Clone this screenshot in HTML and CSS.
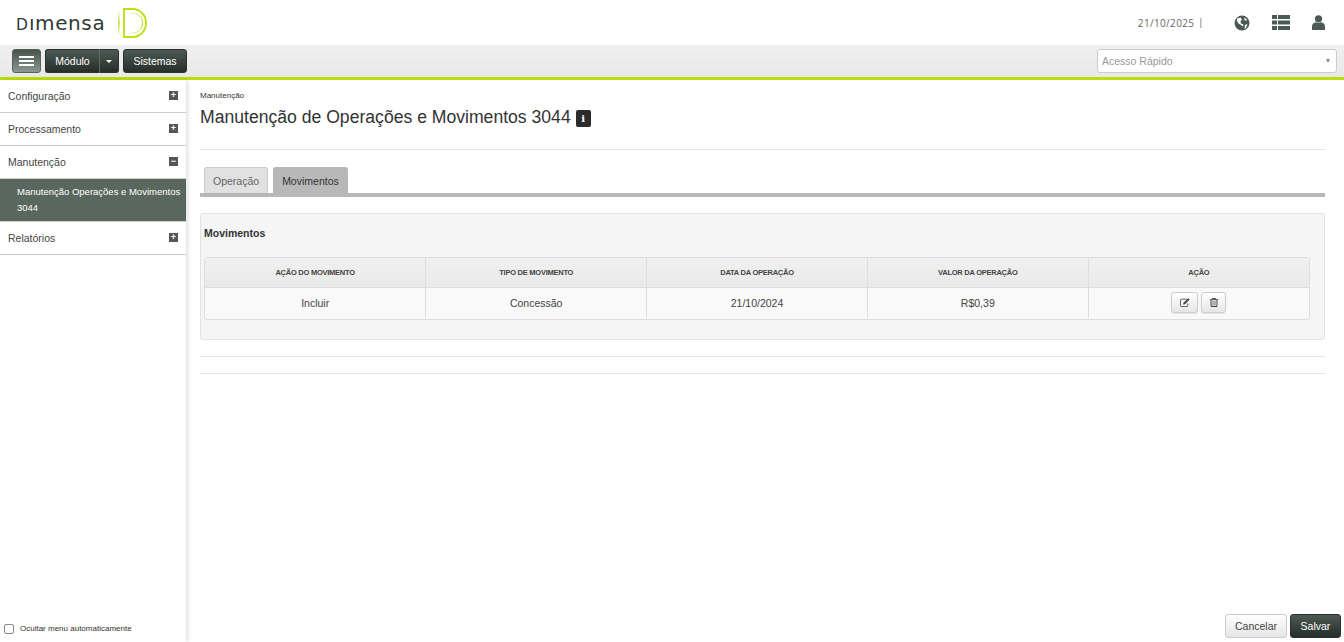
FILE: index.html
```html
<!DOCTYPE html>
<html lang="pt-BR">
<head>
<meta charset="utf-8">
<title>Manutenção de Operações e Movimentos 3044</title>
<link rel="stylesheet" href="styles.css">
</head>
<body>
<header class="topbar">
  <div class="brand">
    <span class="brand-name"><span class="brand-d">D</span>ımensa</span>
    <svg class="brand-mark" width="29" height="30" viewBox="0 0 29 30" fill="none">
      <defs>
        <linearGradient id="fadeBar" x1="0" y1="0" x2="0" y2="1"><stop offset="0" stop-color="#c6e05a" stop-opacity=".25"/><stop offset=".5" stop-color="#b9dc2c"/><stop offset="1" stop-color="#c6e05a" stop-opacity=".25"/></linearGradient>
        <linearGradient id="fadeIn" x1="0" y1="0" x2="1" y2="0"><stop offset="0" stop-color="#c6e05a" stop-opacity=".1"/><stop offset="1" stop-color="#bcdc1e"/></linearGradient>
      </defs>
      <rect x="0" y="4" width="1.600" height="22" fill="url(#fadeBar)"/>
      <path d="M6 1h8.500C22 1 28 7 28 15S22 29 14.500 29H6z" stroke="#bddf10" stroke-width="1.800"/>
      <path d="M9 5h5.500C20 5 24.500 9.500 24.500 15S20 25 14.500 25H9" stroke="url(#fadeIn)" stroke-width="1"/>
    </svg>
  </div>
  <div class="top-tools">
    <span class="date">21/10/2025</span>
    <span class="sep">|</span>
    <svg class="tool globe" width="16" height="16" viewBox="0 0 16 16"><circle cx="8" cy="8" r="7.500" fill="#4b5a52"/><path d="M3 3.500 6.500 2.500 8 4.500 6.500 6.500 7 8.500 9.500 9.500 9 11.500 7 10 4.500 8.500 3 6zM10 2.500 13 4.500 12 6 10.500 5zM11 10l2.500-1-1.500 4-1.500 1z" fill="#fff"/></svg>
    <svg class="tool list" width="18" height="15" viewBox="0 0 18 15"><g fill="#4b5a52"><rect y="0" width="5" height="4"/><rect x="6" y="0" width="12" height="4"/><rect y="5.500" width="5" height="4"/><rect x="6" y="5.500" width="12" height="4"/><rect y="11" width="5" height="4"/><rect x="6" y="11" width="12" height="4"/></g></svg>
    <svg class="tool user" width="13" height="15" viewBox="0 0 13 15"><g fill="#4b5a52"><circle cx="6.500" cy="3.800" r="3.600"/><path d="M0 15v-3.500C0 9 2 7.500 3.800 7.300c1.600 1 3.800 1 5.400 0C11 7.500 13 9 13 11.500V15z"/></g></svg>
  </div>
</header>

<nav class="toolbar">
  <div class="toolbar-left">
    <button class="menu-btn" aria-label="Menu"><span></span><span></span><span></span></button>
    <div class="btn-group">
      <button class="dark-btn modulo">Módulo</button>
      <button class="dark-btn caret-btn" aria-label="Abrir"><i class="caret"></i></button>
    </div>
    <button class="dark-btn sistemas">Sistemas</button>
  </div>
  <div class="quick">
    <span>Acesso Rápido</span>
    <i class="quick-arrow"></i>
  </div>
</nav>

<div class="layout">
  <aside class="sidebar">
    <ul class="menu">
      <li class="menu-item"><span>Configuração</span><i class="toggle">+</i></li>
      <li class="menu-item"><span>Processamento</span><i class="toggle">+</i></li>
      <li class="menu-item"><span>Manutenção</span><i class="toggle minus">−</i></li>
      <li class="menu-sub">Manutenção Operações e Movimentos 3044</li>
      <li class="menu-item"><span>Relatórios</span><i class="toggle">+</i></li>
    </ul>
    <label class="auto-hide"><input type="checkbox"><span>Ocultar menu automaticamente</span></label>
  </aside>

  <main class="content">
    <div class="crumb">Manutenção</div>
    <h1 class="page-title">Manutenção de Operações e Movimentos 3044 <i class="info">i</i></h1>
    <hr class="rule title-rule">
    <div class="tabs">
      <a class="tab">Operação</a>
      <a class="tab active">Movimentos</a>
    </div>
    <section class="panel">
      <h2 class="panel-title">Movimentos</h2>
      <div class="table-wrap">
        <table class="grid">
          <thead>
            <tr><th>AÇÃO DO MOVIMENTO</th><th>TIPO DE MOVIMENTO</th><th>DATA DA OPERAÇÃO</th><th>VALOR DA OPERAÇÃO</th><th>AÇÃO</th></tr>
          </thead>
          <tbody>
            <tr>
              <td>Incluir</td><td>Concessão</td><td>21/10/2024</td><td>R$0,39</td>
              <td class="actions">
                <button class="icon-btn edit" aria-label="Editar"><svg width="10" height="9" viewBox="0 0 10 9" fill="none"><path d="M7 1.200H1.200a.7.7 0 0 0-.7.7v5.900a.7.7 0 0 0 .7.7h5.900a.7.7 0 0 0 .7-.7V5.500" stroke="#555" stroke-width=".9"/><path d="M3.500 4.800 8.300.3l1.400 1.300L5 6.300l-1.800.3z" fill="#444"/></svg></button>
                <button class="icon-btn trash" aria-label="Excluir"><svg width="8" height="9" viewBox="0 0 8 9" fill="none"><path d="M0 1.700h8M2.500 1.500V.5h3v1" stroke="#444"/><path d="M1 2v6.500h6V2" stroke="#444"/><path d="M2.800 3v4.500M4 3v4.500M5.200 3v4.500" stroke="#555" stroke-width=".6"/></svg></button>
              </td>
            </tr>
          </tbody>
        </table>
      </div>
    </section>
    <hr class="rule after-panel">
    <hr class="rule second">
    <footer class="form-actions">
      <button class="light-btn">Cancelar</button>
      <button class="dark-btn save">Salvar</button>
    </footer>
  </main>
</div>
</body>
</html>
```

FILE: styles.css
```css
* { box-sizing: border-box; }
html, body { height: 100%; }
body {
  margin: 0;
  height: 642px;
  overflow: hidden;
  display: flex;
  flex-direction: column;
  background: #fff;
  color: #333;
  font-family: "Liberation Sans", Arial, sans-serif;
  font-size: 10.500px;
}
button { font-family: inherit; cursor: pointer; }

.topbar {
  height: 45px;
  flex: none;
  display: flex;
  justify-content: space-between;
  align-items: center;
  padding: 0 19px 0 16px;
}
.brand { display: flex; align-items: center; gap: 10px; padding-top: 1px; }
.brand-name {
  width: 92px;
  font-family: "DejaVu Sans", sans-serif;
  font-size: 20px;
  letter-spacing: .6px;
  color: #2f3a36;
  line-height: 1;
  font-weight: 400;
  white-space: nowrap;
}
.brand-d { font-size: 15.500px; letter-spacing: 1px; }
.brand-mark { margin-top: 0; }
.top-tools { display: flex; align-items: center; }
.date {
  font-family: "Open Sans", sans-serif;
  font-size: 10px;
  letter-spacing: .35px;
  color: #666;
}
.sep { margin-left: 5px; color: #8a7f70; font-size: 10px; }
.tool { display: block; }
.globe { margin-left: 32px; }
.list { margin-left: 22px; }
.user { margin-left: 22px; }

.toolbar {
  height: 35px;
  flex: none;
  display: flex;
  justify-content: space-between;
  padding: 4px 7px 0 12px;
  background: linear-gradient(#f0f0f0, #e8e8e8);
  border-bottom: 3px solid #bddf00;
}
.toolbar-left { display: flex; gap: 4px; height: 24px; }
.menu-btn {
  width: 29px;
  height: 24px;
  padding: 0;
  border: 1px solid #54625a;
  border-radius: 3px;
  background: linear-gradient(#46534d, #8b9791);
  display: flex;
  flex-direction: column;
  align-items: center;
  justify-content: center;
  gap: 2px;
}
.menu-btn span { width: 15px; height: 2px; background: #fff; }
.btn-group { display: flex; }
.dark-btn {
  height: 24px;
  border: 1px solid #29322e;
  border-radius: 3px;
  background: linear-gradient(#4d5a53, #262e2a);
  color: #fff;
  font-size: 10.500px;
  padding: 0;
}
.modulo { width: 55px; border-radius: 3px 0 0 3px; border-right-color: #5c6963; }
.caret-btn { width: 19px; border-left: 0; border-radius: 0 3px 3px 0; }
.caret {
  display: block;
  margin: 1px auto 0;
  width: 0;
  border: 3px solid transparent;
  border-top-color: #fff;
  border-bottom: 0;
}
.sistemas { width: 64px; }
.quick {
  width: 240px;
  height: 24px;
  display: flex;
  align-items: center;
  justify-content: space-between;
  background: #fff;
  border: 1px solid #ccc;
  border-radius: 3px;
  padding: 0 6px 0 4px;
  color: #999;
  font-size: 10.500px;
}
.quick-arrow {
  width: 0;
  border: 2.500px solid transparent;
  border-top: 4px solid #888;
  border-bottom: 0;
}

.layout { flex: 1; display: flex; min-height: 0; }
.sidebar {
  width: 186px;
  flex: none;
  display: flex;
  flex-direction: column;
  box-shadow: 2px 0 4px rgba(0,0,0,.12);
  background: #fff;
}
.menu { list-style: none; margin: 0; padding: 0; }
.menu-item {
  height: 33px;
  display: flex;
  align-items: center;
  justify-content: space-between;
  padding: 0 8px 1px 8px;
  border-bottom: 1px solid #ccc;
  color: #444;
  font-size: 10.500px;
}
.toggle {
  width: 9px;
  height: 9px;
  margin-top: -1px;
  background: #555;
  color: #fff;
  font: bold 9px/9px "Liberation Sans", sans-serif;
  text-align: center;
}
.menu-sub {
  height: 43px;
  padding: 5px 0 0 17px;
  background: #5a675e;
  border-bottom: 1px solid #ccc;
  color: #fff;
  font-size: 9.500px;
  line-height: 16px;
}
.auto-hide {
  margin-top: auto;
  height: 26px;
  display: flex;
  align-items: flex-start;
  padding: 8px 0 0 4px;
  font-size: 8px;
  color: #333;
}
.auto-hide input {
  width: 10px;
  height: 10px;
  margin: 0 6px 0 0;
  appearance: none;
  border: 1px solid #888;
  border-radius: 2px;
  background: #fff;
}
.auto-hide span { line-height: 9px; }

.content {
  flex: 1;
  min-width: 0;
  display: flex;
  flex-direction: column;
  padding: 0 19px 0 14px;
}
.crumb { margin-top: 11px; height: 10px; font-size: 8px; line-height: 10px; color: #333; }
.page-title {
  margin: 6px 0 0;
  height: 20px;
  font-size: 17.600px;
  font-weight: 400;
  line-height: 20px;
  color: #333;
  white-space: nowrap;
  display: flex;
  align-items: center;
  gap: 5px;
}
.info {
  width: 15px;
  height: 17px;
  margin-top: 2px;
  border-radius: 2px;
  background: #2b2b2b;
  color: #fff;
  font: bold 10px/17px "DejaVu Serif", serif;
  text-align: center;
}
.rule { border: 0; border-top: 1px solid #e5e5e5; margin: 0; width: 100%; flex: none; }
.title-rule { margin-top: 22px; }
.tabs {
  margin-top: 17px;
  display: flex;
  gap: 5px;
  padding-left: 4px;
  border-bottom: 4px solid #b8b8b8;
  height: 30px;
}
.tab {
  height: 26px;
  padding: 0 8px;
  display: flex;
  align-items: center;
  font-size: 10.500px;
  background: #e1e1e1;
  border: 1px solid #ccc;
  border-bottom: 0;
  border-radius: 3px 3px 0 0;
  color: #666;
}
.tab.active { background: #b8b8b8; border-color: #b8b8b8; color: #333; }
.panel {
  margin-top: 16px;
  height: 127px;
  padding: 0 14px 0 3px;
  background: #f5f5f5;
  border: 1px solid #e3e3e3;
  border-radius: 3px;
}
.panel-title {
  margin: 0;
  height: 43px;
  padding-top: 12px;
  font-size: 10.500px;
  line-height: 15px;
  font-weight: 700;
  color: #333;
}
.table-wrap {
  height: 63px;
  border: 1px solid #ddd;
  border-radius: 3px;
  overflow: hidden;
  background: #f9f9f9;
}
.grid { width: 100%; border-collapse: collapse; table-layout: fixed; }
.grid th {
  height: 29px;
  padding: 0;
  font-size: 7.500px;
  letter-spacing: -.25px;
  font-weight: 700;
  color: #444;
  background: linear-gradient(#f0f0f0, #e9e9e9);
  border-bottom: 1px solid #ddd;
  border-left: 1px solid #ddd;
}
.grid td {
  height: 31px;
  padding: 0;
  text-align: center;
  font-size: 10.500px;
  color: #444;
  border-left: 1px solid #ddd;
}
.grid th:first-child, .grid td:first-child { border-left: 0; }
.actions { font-size: 0; }
.icon-btn {
  height: 21px;
  padding: 0;
  margin: 0;
  border: 1px solid #ccc;
  border-radius: 3px;
  background: linear-gradient(#fff, #e6e6e6);
  vertical-align: middle;
  box-shadow: 0 1px 1px rgba(0,0,0,.08);
}
.icon-btn svg { display: block; margin: 0 auto; }
.edit { width: 27px; }
.trash { width: 25px; }
.after-panel { margin-top: 16px; }
.second { margin-top: 16px; }
.form-actions {
  margin-top: auto;
  margin-right: -16px;
  display: flex;
  justify-content: flex-end;
  gap: 3px;
  padding-bottom: 4px;
}
.light-btn {
  width: 62px;
  height: 24px;
  padding: 0;
  border: 1px solid #ccc;
  border-radius: 3px;
  background: linear-gradient(#fff, #e6e6e6);
  color: #444;
  font-size: 10.500px;
}
.save { width: 51px; }
```
